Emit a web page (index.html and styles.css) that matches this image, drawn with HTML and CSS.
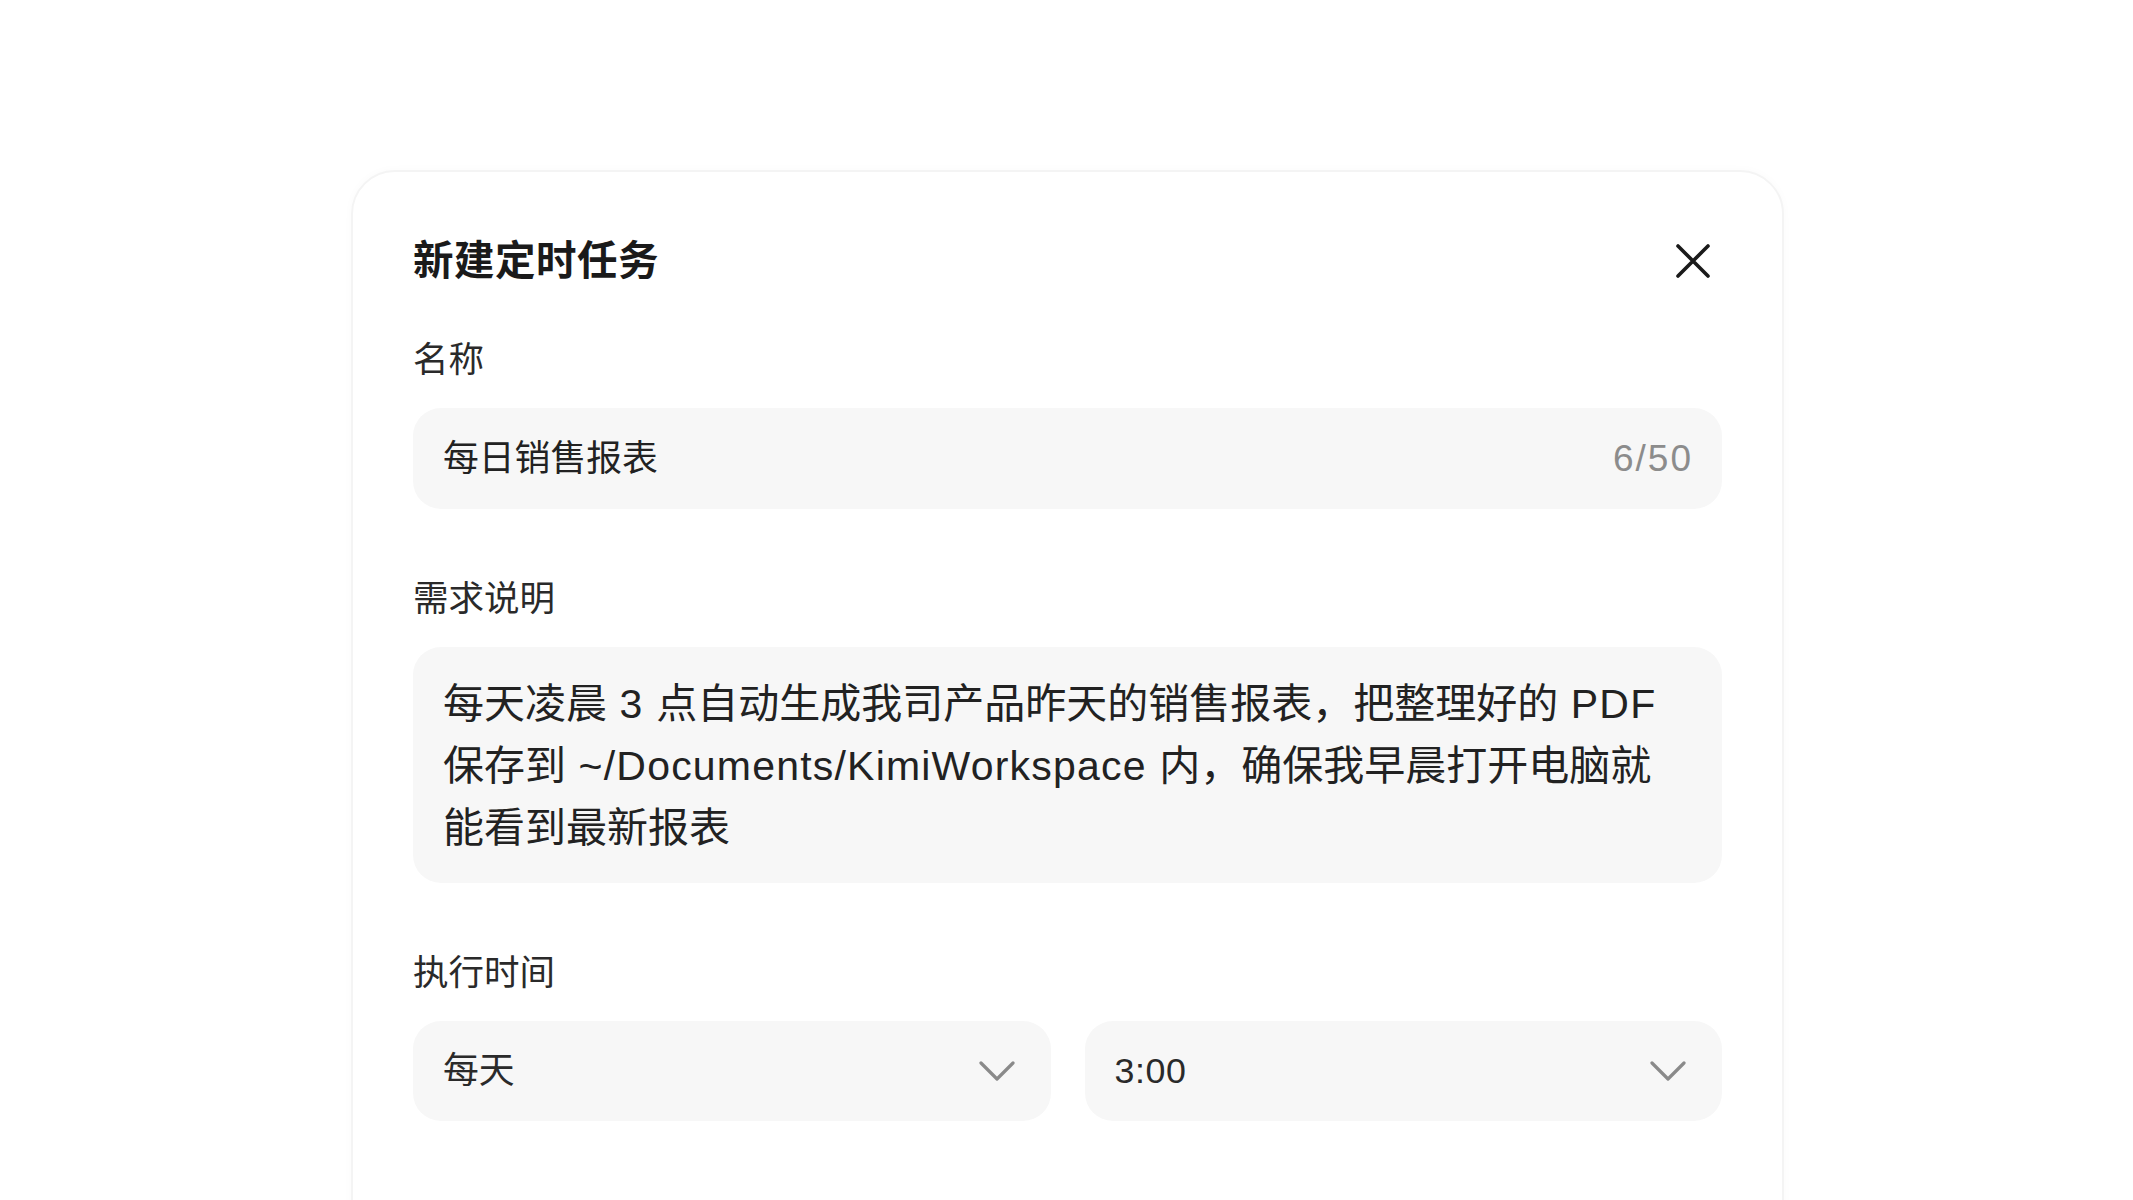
FILE: index.html
```html
<!DOCTYPE html>
<html lang="zh-CN">
<head>
<meta charset="utf-8">
<title>新建定时任务</title>
<link rel="stylesheet" href="styles.css">
</head>
<body>
<div class="page">
  <section class="dialog">
    <header class="dialog-header">
      <h1 class="dialog-title">新建定时任务</h1>
      <button class="close-btn" aria-label="关闭">
        <svg width="36" height="36" viewBox="0 0 36 36" fill="none" stroke="#1a1a1a" stroke-width="3.6" stroke-linecap="round">
          <path d="M3 3 L33 33 M33 3 L3 33"/>
        </svg>
      </button>
    </header>

    <div class="field">
      <div class="field-label">名称</div>
      <div class="input">
        <span class="input-value">每日销售报表</span>
        <span class="input-count">6/50</span>
      </div>
    </div>

    <div class="field">
      <div class="field-label">需求说明</div>
      <div class="textarea">每天凌晨<span class="latin"> 3 </span>点自动生成我司产品昨天的销售报表，把整理好的<span class="latin"> PDF</span><br>保存到<span class="latin"> ~/Documents/KimiWorkspace </span>内，确保我早晨打开电脑就<br>能看到最新报表</div>
    </div>

    <div class="field">
      <div class="field-label">执行时间</div>
      <div class="select-row">
        <div class="select">
          <span class="select-value">每天</span>
          <svg class="chevron" width="36" height="22" viewBox="0 0 36 22" fill="none" stroke="#8a8a8a" stroke-width="3.2" stroke-linecap="round" stroke-linejoin="round">
            <path d="M2 3 L18 19 L34 3"/>
          </svg>
        </div>
        <div class="select">
          <span class="select-value time">3:00</span>
          <svg class="chevron" width="36" height="22" viewBox="0 0 36 22" fill="none" stroke="#8a8a8a" stroke-width="3.2" stroke-linecap="round" stroke-linejoin="round">
            <path d="M2 3 L18 19 L34 3"/>
          </svg>
        </div>
      </div>
    </div>
  </section>
</div>
</body>
</html>
```

FILE: styles.css
```css
* {
  box-sizing: border-box;
}

html, body {
  margin: 0;
  padding: 0;
  background: #ffffff;
  overflow: hidden;
}

body {
  font-family: "Liberation Sans", "Noto Sans CJK SC", sans-serif;
  color: #222222;
}

.page {
  width: 2133px;
  height: 1200px;
  padding-top: 170px;
  padding-left: 351px;
}

.dialog {
  width: 1433px;
  min-height: 1200px;
  background: #ffffff;
  border: 2px solid #f4f4f4;
  border-radius: 44px;
  box-shadow: 0 0 10px rgba(0, 0, 0, 0.025);
  padding: 60px 60px 80px 60px;
  display: flex;
  flex-direction: column;
}

.dialog-header {
  display: flex;
  align-items: center;
  justify-content: space-between;
  height: 58px;
}

.dialog-title {
  margin: 0;
  font-size: 40.5px;
  line-height: 56px;
  font-weight: 700;
  color: #1a1a1a;
  letter-spacing: 0.5px;
}

.close-btn {
  width: 58px;
  height: 58px;
  border: none;
  background: transparent;
  padding: 0;
  display: flex;
  align-items: center;
  justify-content: center;
  cursor: pointer;
}

.field {
  display: flex;
  flex-direction: column;
  margin-top: 66px;
}

.dialog-header + .field {
  margin-top: 46px;
}

.field-label {
  font-size: 35.5px;
  line-height: 48px;
  color: #2a2a2a;
  margin-bottom: 24px;
}

.input {
  height: 101px;
  background: #f7f7f7;
  border-radius: 28px;
  padding: 0 29px 0 30px;
  display: flex;
  align-items: center;
  justify-content: space-between;
}

.input-value {
  font-size: 35.8px;
  line-height: 48px;
  color: #222222;
}

.input-count {
  font-size: 37px;
  line-height: 48px;
  color: #8c8c8c;
  letter-spacing: 2px;
}

.textarea {
  height: 236px;
  background: #f7f7f7;
  border-radius: 28px;
  padding: 26px 30px 24px 30px;
  font-size: 41px;
  line-height: 62px;
  color: #222222;
  white-space: nowrap;
}

.latin {
  letter-spacing: 1.2px;
}

.select-row {
  display: grid;
  grid-template-columns: 1fr 1fr;
  gap: 34px;
}

.select {
  height: 100px;
  background: #f7f7f7;
  border-radius: 28px;
  padding: 0 36px 0 30px;
  display: flex;
  align-items: center;
  justify-content: space-between;
}

.select-value {
  font-size: 35.8px;
  line-height: 48px;
  color: #2a2a2a;
}

.select-value.time {
  letter-spacing: 0.6px;
}

.chevron {
  display: block;
}
```
